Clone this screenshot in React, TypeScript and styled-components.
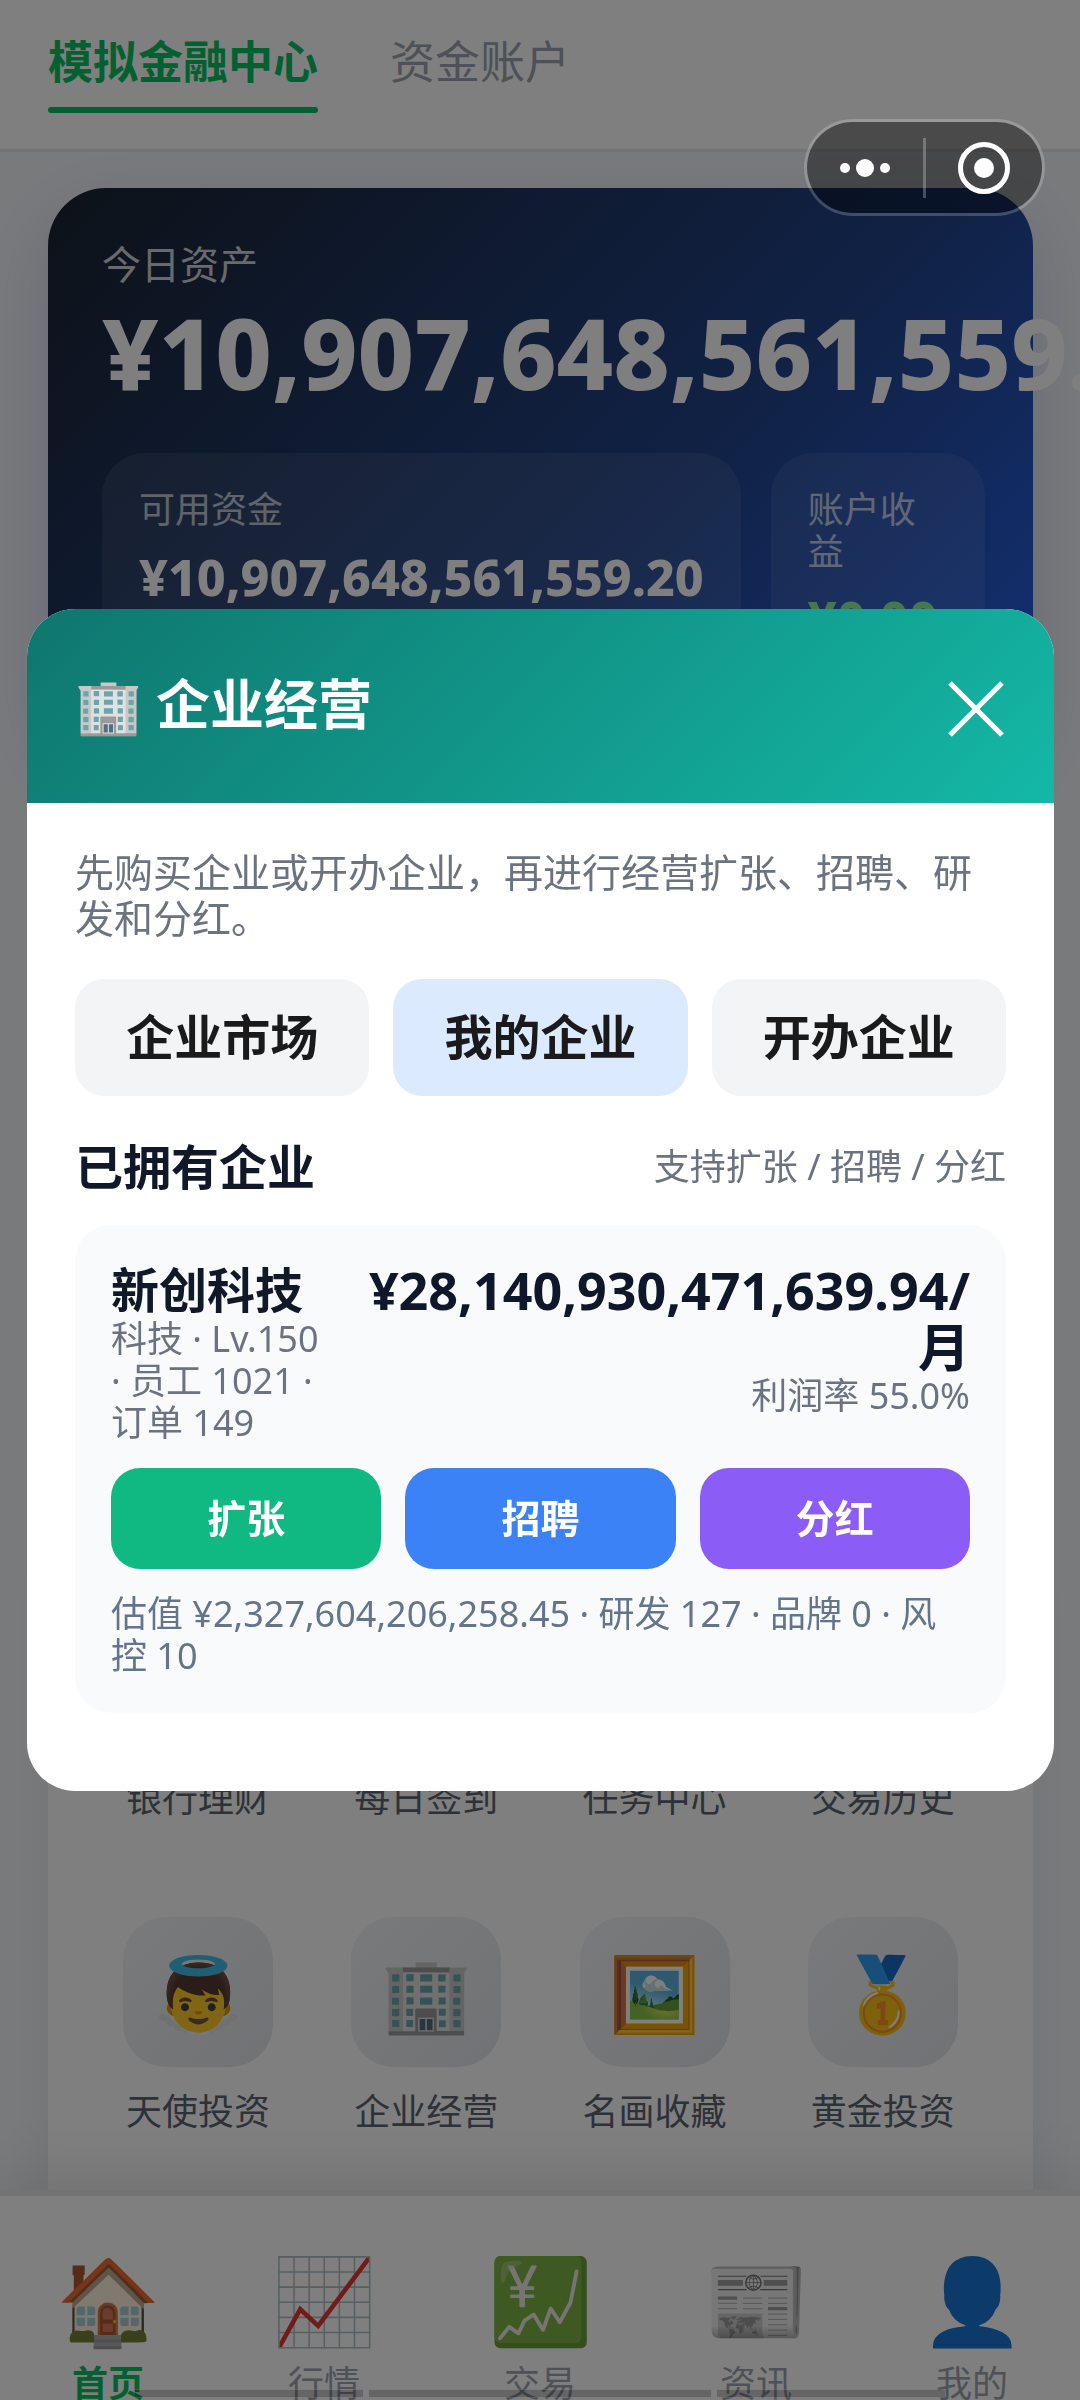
import { useState } from "react";
import styled, { createGlobalStyle } from "styled-components";

const SHORTCUTS = [
  { icon: "", label: "银行理财" },
  { icon: "", label: "每日签到" },
  { icon: "", label: "任务中心" },
  { icon: "", label: "交易历史" },
  { icon: "👼", label: "天使投资" },
  { icon: "🏢", label: "企业经营" },
  { icon: "🖼️", label: "名画收藏" },
  { icon: "🥇", label: "黄金投资" },
];

const NAV_ITEMS = [
  { icon: "🏠", label: "首页" },
  { icon: "📈", label: "行情" },
  { icon: "💹", label: "交易" },
  { icon: "📰", label: "资讯" },
  { icon: "👤", label: "我的" },
];

const TABS = ["企业市场", "我的企业", "开办企业"];

const App = () => {
  const [tab, setTab] = useState("我的企业");

  return (
    <>
      <GlobalStyle />
      <Page>
        <Header>
          <HeaderTab $active>
            模拟金融中心
            <Underline />
          </HeaderTab>
          <HeaderTab>资金账户</HeaderTab>
        </Header>
        <Main>
          <Wallet>
            <WalletLabel>今日资产</WalletLabel>
            <WalletTotal>¥10,907,648,561,559.20</WalletTotal>
            <WalletRow>
              <WalletBox>
                <BoxLabel>可用资金</BoxLabel>
                <BoxValue>¥10,907,648,561,559.20</BoxValue>
              </WalletBox>
              <WalletBox $grow>
                <BoxLabel>账户收益</BoxLabel>
                <BoxValue $profit>¥0.00</BoxValue>
              </WalletBox>
            </WalletRow>
          </Wallet>
          <Shortcuts>
            {SHORTCUTS.map(({ icon, label }) => (
              <Shortcut key={label}>
                <ShortcutIcon>{icon}</ShortcutIcon>
                {label}
              </Shortcut>
            ))}
          </Shortcuts>
        </Main>
        <Nav>
          {NAV_ITEMS.map(({ icon, label }, i) => (
            <NavItem key={label} href={`#${i}`} $active={i === 0}>
              <NavIcon>{icon}</NavIcon>
              {label}
            </NavItem>
          ))}
        </Nav>
      </Page>

      <Overlay>
        <Modal role="dialog" aria-modal="true">
          <ModalHeader>
            <ModalTitle>🏢 企业经营</ModalTitle>
            <CloseButton>
              <svg width="56" height="56" viewBox="0 0 56 56" fill="none" stroke="white" strokeWidth="5">
                <path d="M2 2L54 54M54 2L2 54" />
              </svg>
            </CloseButton>
          </ModalHeader>
          <ModalBody>
            <Description>先购买企业或开办企业，再进行经营扩张、招聘、研发和分红。</Description>
            <TabRow>
              {TABS.map((name) => (
                <TabButton key={name} $active={name === tab} onClick={() => setTab(name)}>
                  {name}
                </TabButton>
              ))}
            </TabRow>
            <SectionHead>
              <SectionTitle>已拥有企业</SectionTitle>
              <SectionHint>支持扩张 / 招聘 / 分红</SectionHint>
            </SectionHead>
            <Company>
              <CompanyTop>
                <div>
                  <CompanyName>新创科技</CompanyName>
                  <CompanyMeta>科技 · Lv.150 · 员工 1021 · 订单 149</CompanyMeta>
                </div>
                <CompanyIncome>
                  <Income>¥28,140,930,471,639.94/月</Income>
                  <CompanyMeta>利润率 55.0%</CompanyMeta>
                </CompanyIncome>
              </CompanyTop>
              <ActionRow>
                <ActionButton $color="#10b981">扩张</ActionButton>
                <ActionButton $color="#3b82f6">招聘</ActionButton>
                <ActionButton $color="#8b5cf6">分红</ActionButton>
              </ActionRow>
              <CompanyFoot>估值 ¥2,327,604,206,258.45 · 研发 127 · 品牌 0 · 风控 10</CompanyFoot>
            </Company>
          </ModalBody>
        </Modal>
      </Overlay>

      <Capsule>
        <CapsuleButton>
          <svg width="52" height="52" viewBox="0 0 52 52" fill="white">
            <circle cx="6" cy="26" r="5" />
            <circle cx="26" cy="26" r="9" />
            <circle cx="46" cy="26" r="5" />
          </svg>
        </CapsuleButton>
        <CapsuleDivider />
        <CapsuleButton>
          <svg width="52" height="52" viewBox="0 0 52 52">
            <circle cx="26" cy="26" r="23.5" fill="none" stroke="white" strokeWidth="5" />
            <circle cx="26" cy="26" r="10" fill="white" />
          </svg>
        </CapsuleButton>
      </Capsule>

      <GestureBar>
        <GesturePart />
        <GesturePart $wide />
        <GesturePart />
      </GestureBar>
    </>
  );
};

export default App;

const GlobalStyle = createGlobalStyle`
  * {
    box-sizing: border-box;
    margin: 0;
    padding: 0;
  }
  body {
    font-family: "Noto Sans", "Noto Sans CJK SC", sans-serif;
    color: #111827;
  }
  button {
    border: none;
    background: none;
    font-family: inherit;
    cursor: pointer;
  }
  a {
    text-decoration: none;
  }
`;

const Page = styled.div`
  display: flex;
  flex-direction: column;
  height: 100vh;
  overflow: hidden;
  background: #f3f5f9;
`;

const Header = styled.header`
  display: flex;
  align-items: flex-start;
  gap: 72px;
  padding: 36px 48px;
  border-bottom: 3px solid #e5e7eb;
  background: white;
`;

const HeaderTab = styled.button<{ $active?: boolean }>`
  display: flex;
  flex-direction: column;
  gap: 19px;
  font-size: 45px;
  line-height: 52px;
  font-weight: ${(props) => (props.$active ? 700 : 400)};
  color: ${(props) => (props.$active ? "#07c160" : "#9ca3af")};
`;

const Underline = styled.span`
  height: 6px;
  border-radius: 3px;
  background: #07c160;
`;

const Main = styled.main`
  display: flex;
  flex: 1;
  flex-direction: column;
  justify-content: space-between;
  min-height: 0;
  padding: 36px 47px 0 48px;
`;

const Wallet = styled.section`
  min-height: 560px;
  padding: 54px;
  border-radius: 58px;
  background: linear-gradient(135deg, #1b2430 0%, #22448c 60%, #2563eb 100%);
  box-shadow: 0 24px 72px rgba(30, 64, 175, 0.18);
  color: white;
`;

const WalletLabel = styled.p`
  font-size: 39px;
  line-height: 44px;
  opacity: 0.8;
`;

const WalletTotal = styled.p`
  margin-top: 8px;
  font-size: 98px;
  line-height: 116px;
  font-weight: 800;
  white-space: nowrap;
`;

const WalletRow = styled.div`
  display: flex;
  gap: 30px;
  margin-top: 43px;
`;

const WalletBox = styled.div<{ $grow?: boolean }>`
  flex: ${(props) => (props.$grow ? "1 0 0" : "none")};
  min-width: 214px;
  padding: 36px 37px;
  border-radius: 43px;
  background: rgba(255, 255, 255, 0.08);
`;

const BoxLabel = styled.p`
  font-size: 36px;
  line-height: 42px;
  opacity: 0.7;
`;

const BoxValue = styled.p<{ $profit?: boolean }>`
  margin-top: 17px;
  font-size: 50px;
  line-height: 58px;
  font-weight: 800;
  color: ${(props) => (props.$profit ? "#8cf0a0" : "white")};
`;

const Shortcuts = styled.section`
  display: grid;
  grid-template-columns: repeat(4, 1fr);
  row-gap: 97px;
  padding: 36px 36px 57px;
  background: white;
  box-shadow: 0 0 48px rgba(15, 23, 42, 0.06);
`;

const Shortcut = styled.button`
  display: flex;
  flex-direction: column;
  align-items: center;
  gap: 24px;
  font-size: 36px;
  line-height: 42px;
  color: #5b6472;
`;

const ShortcutIcon = styled.span`
  display: flex;
  align-items: center;
  justify-content: center;
  width: 150px;
  height: 150px;
  border-radius: 43px;
  background: linear-gradient(135deg, #f3f4f6, #e2e5ea);
  font-size: 73px;
`;

const Nav = styled.nav`
  position: relative;
  display: grid;
  flex: 0 0 210px;
  grid-template-columns: repeat(5, 1fr);
  min-height: 0;
  padding-top: 54px;
  border-top: 6px solid #e5e7eb;
  background: white;
  box-shadow: 0 -12px 60px rgba(0, 0, 0, 0.12);
`;

const NavItem = styled.a<{ $active: boolean }>`
  display: flex;
  flex-direction: column;
  align-items: center;
  gap: 15px;
  font-size: 36px;
  line-height: 42px;
  font-weight: ${(props) => (props.$active ? 700 : 400)};
  color: ${(props) => (props.$active ? "#07c160" : "#9ca3af")};
`;

const NavIcon = styled.span`
  font-size: 84px;
  line-height: 98px;
  font-weight: 400;
`;

const Overlay = styled.div`
  position: fixed;
  inset: 0;
  display: flex;
  align-items: center;
  justify-content: center;
  padding: 26px 26px 26px 27px;
  background: rgba(0, 0, 0, 0.5);
`;

const Modal = styled.div`
  width: 100%;
  overflow: hidden;
  border-radius: 48px;
  background: white;
`;

const ModalHeader = styled.div`
  display: flex;
  align-items: flex-start;
  justify-content: space-between;
  padding: 64px 50px 66px 48px;
  background: linear-gradient(135deg, #0f766e, #14b8a6);
`;

const ModalTitle = styled.h2`
  font-size: 54px;
  line-height: 62px;
  font-weight: 700;
  color: white;
`;

const CloseButton = styled.button`
  display: flex;
  padding-top: 8px;
`;

const ModalBody = styled.div`
  padding: 46px 48px 78px;
`;

const Description = styled.p`
  font-size: 39px;
  line-height: 46px;
  color: #6b7280;
`;

const TabRow = styled.div`
  display: grid;
  grid-template-columns: repeat(3, 1fr);
  gap: 24px;
  margin-top: 38px;
`;

const TabButton = styled.button<{ $active: boolean }>`
  padding: 29px 0 31px;
  border-radius: 29px;
  background: ${(props) => (props.$active ? "#dbeafe" : "#f3f4f6")};
  font-size: 48px;
  line-height: 57px;
  font-weight: 700;
  color: #1a1a1a;
`;

const SectionHead = styled.div`
  display: flex;
  align-items: center;
  justify-content: space-between;
  margin: 42px 0 30px;
`;

const SectionTitle = styled.h3`
  font-size: 48px;
  line-height: 57px;
  font-weight: 700;
`;

const SectionHint = styled.span`
  font-size: 36px;
  line-height: 42px;
  color: #6b7280;
`;

const Company = styled.section`
  padding: 36px;
  border-radius: 36px;
  background: #f8fafc;
`;

const CompanyTop = styled.div`
  display: grid;
  grid-template-columns: 1fr 3fr;
  gap: 12px;
`;

const CompanyName = styled.h4`
  font-size: 48px;
  line-height: 57px;
  font-weight: 700;
`;

const CompanyMeta = styled.p`
  font-size: 36px;
  line-height: 42px;
  color: #6b7280;
`;

const CompanyIncome = styled.div`
  text-align: right;
`;

const Income = styled.p`
  font-size: 52px;
  line-height: 57px;
  font-weight: 700;
  color: #0f172a;
`;

const ActionRow = styled.div`
  display: grid;
  grid-template-columns: repeat(3, 1fr);
  gap: 24px;
  margin: 24px 0;
`;

const ActionButton = styled.button<{ $color: string }>`
  padding: 27px 0 28px;
  border-radius: 29px;
  background: ${(props) => props.$color};
  font-size: 39px;
  line-height: 46px;
  font-weight: 700;
  color: white;
`;

const CompanyFoot = styled.p`
  font-size: 36px;
  line-height: 42px;
  color: #64748b;
`;

const Capsule = styled.div`
  position: fixed;
  top: 119px;
  right: 35px;
  display: flex;
  align-items: center;
  width: 241px;
  height: 97px;
  border: 3px solid rgba(255, 255, 255, 0.2);
  border-radius: 49px;
  background: rgba(0, 0, 0, 0.42);
  background-clip: padding-box;
`;

const CapsuleButton = styled.button`
  display: flex;
  flex: 1;
  justify-content: center;
`;

const CapsuleDivider = styled.span`
  width: 3px;
  height: 60px;
  background: rgba(255, 255, 255, 0.25);
`;

/* system gesture handle along the bottom edge */
const GestureBar = styled.div`
  position: fixed;
  right: 0;
  bottom: 2px;
  left: 0;
  display: flex;
  gap: 6px;
  padding: 0 135px;
`;

const GesturePart = styled.span<{ $wide?: boolean }>`
  flex: ${(props) => (props.$wide ? 3 : 2)};
  height: 9px;
  border: solid rgba(255, 255, 255, 0.15);
  border-width: 1px 0;
  background: rgba(0, 0, 0, 0.2);
`;
